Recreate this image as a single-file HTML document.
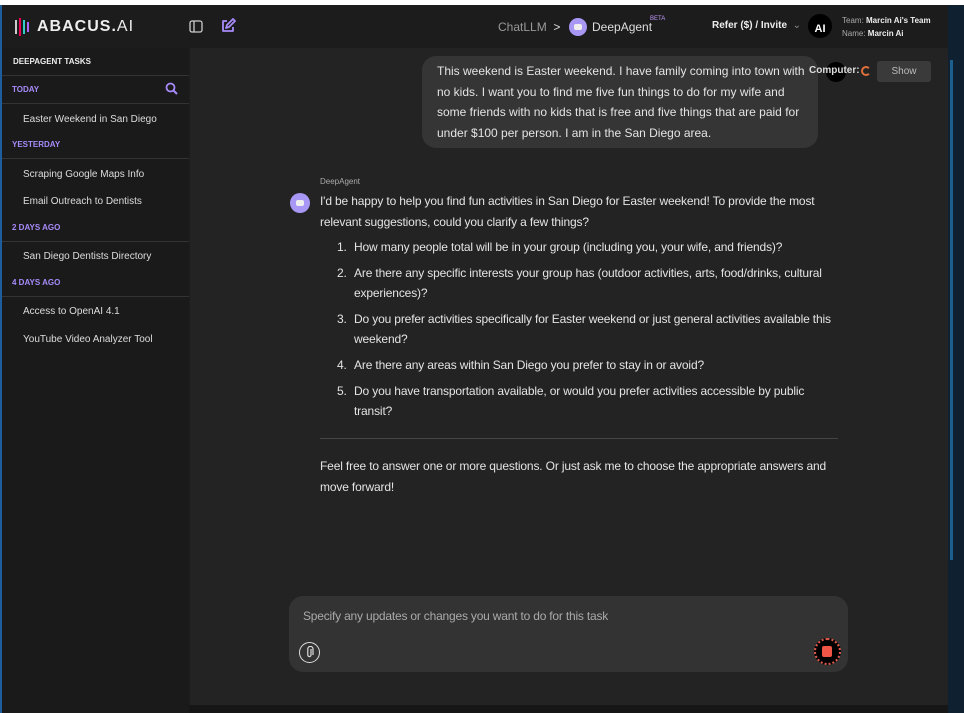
<!DOCTYPE html>
<html><head><meta charset="utf-8"><style>
*{margin:0;padding:0;box-sizing:border-box}
body{width:964px;height:713px;background:#1c1c1c;font-family:"Liberation Sans",sans-serif;position:relative;overflow:hidden;color:#e6e6e6}
.a{position:absolute;white-space:nowrap}
.side{position:absolute;left:2px;top:48px;width:187px;height:665px;background:#1a1a1a}
.sh{position:absolute;left:12px;font-size:8px;font-weight:bold;color:#a78bfa}
.si{position:absolute;left:23px;font-size:10px;color:#ddd}
.ln{position:absolute;left:2px;width:187px;height:1px;background:#333}
.main{position:absolute;left:190px;top:48px;width:758px;height:657px;background:#232323}
.t{font-size:12px;color:#e4e4e4;line-height:20.5px;letter-spacing:-0.15px}
</style></head><body>
<div class="a" style="left:0;top:0;width:964px;height:5px;background:#fff"></div>
<div class="a" style="left:0;top:5px;width:2px;height:708px;background:#1d5d9e"></div>
<div class="a" style="left:948px;top:5px;width:16px;height:708px;background:#0f2030"></div>
<div class="a" style="left:950px;top:60px;width:3px;height:500px;background:#1c5e8e"></div>
<div class="a" style="left:2px;top:705px;width:946px;height:8px;background:#161616"></div>
<svg class="a" style="left:14px;top:18px" width="16" height="18"><g stroke-width="2"><line x1="2" y1="2" x2="2" y2="16" stroke="#ccc"/><line x1="6" y1="0" x2="6" y2="18" stroke="#e05"/><line x1="10" y1="2" x2="10" y2="16" stroke="#3cc"/><line x1="14" y1="4" x2="14" y2="14" stroke="#a6f"/></g></svg>
<div class="a" style="left:37px;top:18px;font-size:16px;font-weight:bold;color:#eee;letter-spacing:1px">ABACUS.<span style="font-weight:normal">AI</span></div>
<svg class="a" style="left:189px;top:20px" width="14" height="13"><rect x="1" y="1" width="12" height="11" rx="2" fill="none" stroke="#ccc" stroke-width="1.3"/><line x1="5" y1="1" x2="5" y2="12" stroke="#ccc" stroke-width="1.3"/></svg>
<svg class="a" style="left:220px;top:18px" width="16" height="16"><path d="M7 3H3v10h10V9" fill="none" stroke="#a78bfa" stroke-width="1.8" stroke-linejoin="round"/><path d="M6 10l1-3 6-6 2 2-6 6z" fill="none" stroke="#a78bfa" stroke-width="1.8" stroke-linejoin="round"/></svg>
<div class="a" style="left:498px;top:20px;font-size:12px;color:#999">ChatLLM &nbsp;<span style="color:#ddd">&gt;</span></div>
<div class="a" style="left:569px;top:18px;width:18px;height:18px;border-radius:50%;background:#a897f5"></div>
<div class="a" style="left:574px;top:24px;width:8px;height:6px;border-radius:2px;background:#eee"></div>
<div class="a" style="left:592px;top:20px;font-size:12px;color:#ddd">DeepAgent</div>
<div class="a" style="left:650px;top:16px;font-size:6px;color:#c39bff">BETA</div>
<div class="a" style="left:712px;top:20px;font-size:10px;font-weight:bold;color:#eee">Refer ($) / Invite <span style="color:#888;font-weight:normal">&nbsp;⌄</span></div>
<div class="a" style="left:808px;top:14px;width:24px;height:24px;border-radius:50%;background:#000;color:#fff;font-size:11px;font-weight:bold;text-align:center;line-height:30px">AI</div>
<div class="a" style="left:842px;top:14px;font-size:8px;color:#aaa;line-height:13px">Team: <b style="color:#eee">Marcin Ai's Team</b><br>Name: <b style="color:#eee">Marcin Ai</b></div>
<div class="side"></div>
<div class="a" style="left:13px;top:57px;font-size:8px;font-weight:bold;color:#eee">DEEPAGENT TASKS</div>
<div class="ln" style="top:75px"></div>
<div class="sh" style="top:85px">TODAY</div>
<svg class="a" style="left:165px;top:82px" width="13" height="13"><circle cx="5.5" cy="5.5" r="4" fill="none" stroke="#a78bfa" stroke-width="1.8"/><line x1="8.5" y1="8.5" x2="12" y2="12" stroke="#a78bfa" stroke-width="2"/></svg>
<div class="ln" style="top:103px"></div>
<div class="si" style="top:114px">Easter Weekend in San Diego</div>
<div class="sh" style="top:140px">YESTERDAY</div>
<div class="ln" style="top:158px"></div>
<div class="si" style="top:169px">Scraping Google Maps Info</div>
<div class="si" style="top:196px">Email Outreach to Dentists</div>
<div class="sh" style="top:223px">2 DAYS AGO</div>
<div class="ln" style="top:241px"></div>
<div class="si" style="top:251px">San Diego Dentists Directory</div>
<div class="sh" style="top:278px">4 DAYS AGO</div>
<div class="ln" style="top:296px"></div>
<div class="si" style="top:306px">Access to OpenAI 4.1</div>
<div class="si" style="top:334px">YouTube Video Analyzer Tool</div>
<div class="main"></div>
<div class="a" style="left:422px;top:56px;width:396px;height:92px;border-radius:14px;background:#353535"></div>
<div class="a t" style="left:437px;top:61px;white-space:normal;width:372px;letter-spacing:0">This weekend is Easter weekend. I have family coming into town with<br>no kids. I want you to find me five fun things to do for my wife and<br>some friends with no kids that is free and five things that are paid for<br>under $100 per person. I am in the San Diego area.</div>
<div class="a" style="left:826px;top:62px;width:20px;height:20px;border-radius:50%;background:#000"></div>
<div class="a" style="left:809px;top:65px;font-size:10px;font-weight:bold;color:#ddd">Computer:</div>
<div class="a" style="left:861px;top:66px;width:10px;height:10px;border-radius:50%;border:2px solid #e0703a;border-right-color:transparent"></div>
<div class="a" style="left:877px;top:61px;width:54px;height:21px;border-radius:3px;background:#3a3a3a;color:#bbb;font-size:10px;text-align:center;line-height:21px">Show</div>
<div class="a" style="left:320px;top:177px;font-size:8px;color:#aaa">DeepAgent</div>
<div class="a" style="left:290px;top:193px;width:20px;height:20px;border-radius:50%;background:#a897f5"></div>
<div class="a" style="left:296px;top:200px;width:8px;height:6px;border-radius:2px;background:#eee"></div>
<div class="a t" style="left:320px;top:191px;white-space:normal;width:520px">I'd be happy to help you find fun activities in San Diego for Easter weekend! To provide the most relevant suggestions, could you clarify a few things?</div>
<div class="a t" style="left:337px;top:237px;white-space:normal;width:505px">
<div style="display:flex;margin-bottom:5.2px"><span style="width:17px">1.</span><span>How many people total will be in your group (including you, your wife, and friends)?</span></div>
<div style="display:flex;margin-bottom:5.2px"><span style="width:17px;flex:none">2.</span><span>Are there any specific interests your group has (outdoor activities, arts, food/drinks, cultural experiences)?</span></div>
<div style="display:flex;margin-bottom:5.2px"><span style="width:17px;flex:none">3.</span><span>Do you prefer activities specifically for Easter weekend or just general activities available this weekend?</span></div>
<div style="display:flex;margin-bottom:5.2px"><span style="width:17px">4.</span><span>Are there any areas within San Diego you prefer to stay in or avoid?</span></div>
<div style="display:flex"><span style="width:17px;flex:none">5.</span><span>Do you have transportation available, or would you prefer activities accessible by public transit?</span></div>
</div>
<div class="a" style="left:320px;top:438px;width:518px;height:1px;background:#444"></div>
<div class="a t" style="left:320px;top:456px;white-space:normal;width:530px">Feel free to answer one or more questions. Or just ask me to choose the appropriate answers and move forward!</div>
<div class="a" style="left:289px;top:596px;width:559px;height:76px;border-radius:14px;background:#333"></div>
<div class="a" style="left:303px;top:609px;font-size:12px;color:#aaa;letter-spacing:-0.2px">Specify any updates or changes you want to do for this task</div>
<div class="a" style="left:299px;top:642px;width:21px;height:21px;border-radius:50%;border:1.5px solid #ddd"></div>
<svg class="a" style="left:305px;top:646px" width="9" height="13"><path d="M6 3v6a1.6 1.6 0 0 1-3.2 0V3a2.6 2.6 0 0 1 5.2 0v6" fill="none" stroke="#ddd" stroke-width="1.2"/></svg>
<div class="a" style="left:814px;top:638px;width:27px;height:27px;border-radius:50%;background:#000;border:2px dotted #e25a4a"></div>
<div class="a" style="left:822px;top:646px;width:10px;height:11px;border-radius:2px;background:#f05545"></div>
</body></html>
